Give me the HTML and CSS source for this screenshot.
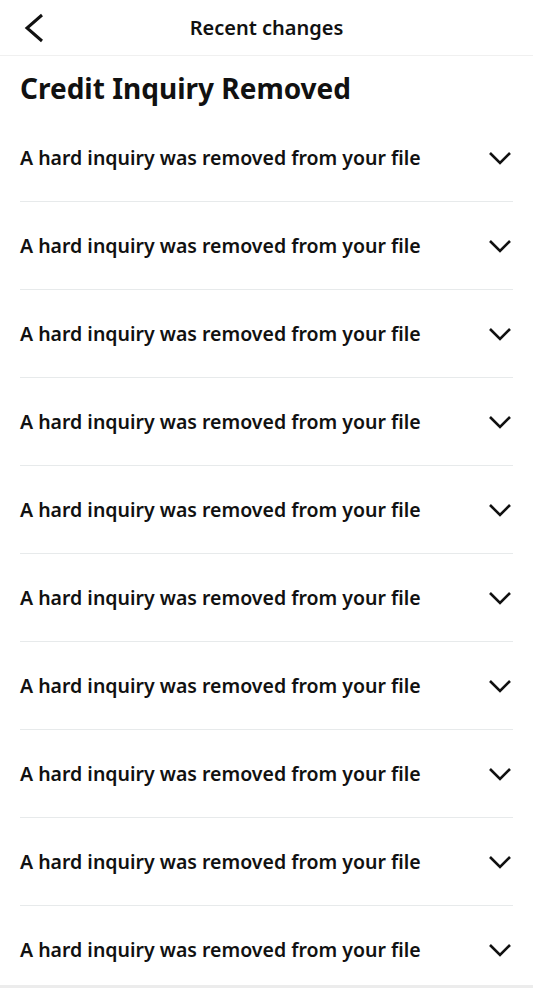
FILE: index.html
```html
<!DOCTYPE html>
<html lang="en">
<head>
<meta charset="utf-8">
<title>Recent changes</title>
<link rel="stylesheet" href="styles.css">
</head>
<body>
<header class="topbar">
  <button class="back" aria-label="Back">
    <svg width="24" height="32" viewBox="0 0 24 32"><path d="M20 3 L5 16 L20 29" fill="none" stroke="#111" stroke-width="3"/></svg>
  </button>
  <h1 class="topbar-title">Recent changes</h1>
</header>
<main>
  <h2 class="heading">Credit Inquiry Removed</h2>
  <ul class="list">
    <li class="row"><span class="row-text">A hard inquiry was removed from your file</span><svg class="chev" width="24" height="14" viewBox="0 0 24 14"><path d="M2 2 L12 12 L22 2" fill="none" stroke="#111" stroke-width="2.6"/></svg></li>
    <li class="row"><span class="row-text">A hard inquiry was removed from your file</span><svg class="chev" width="24" height="14" viewBox="0 0 24 14"><path d="M2 2 L12 12 L22 2" fill="none" stroke="#111" stroke-width="2.6"/></svg></li>
    <li class="row"><span class="row-text">A hard inquiry was removed from your file</span><svg class="chev" width="24" height="14" viewBox="0 0 24 14"><path d="M2 2 L12 12 L22 2" fill="none" stroke="#111" stroke-width="2.6"/></svg></li>
    <li class="row"><span class="row-text">A hard inquiry was removed from your file</span><svg class="chev" width="24" height="14" viewBox="0 0 24 14"><path d="M2 2 L12 12 L22 2" fill="none" stroke="#111" stroke-width="2.6"/></svg></li>
    <li class="row"><span class="row-text">A hard inquiry was removed from your file</span><svg class="chev" width="24" height="14" viewBox="0 0 24 14"><path d="M2 2 L12 12 L22 2" fill="none" stroke="#111" stroke-width="2.6"/></svg></li>
    <li class="row"><span class="row-text">A hard inquiry was removed from your file</span><svg class="chev" width="24" height="14" viewBox="0 0 24 14"><path d="M2 2 L12 12 L22 2" fill="none" stroke="#111" stroke-width="2.6"/></svg></li>
    <li class="row"><span class="row-text">A hard inquiry was removed from your file</span><svg class="chev" width="24" height="14" viewBox="0 0 24 14"><path d="M2 2 L12 12 L22 2" fill="none" stroke="#111" stroke-width="2.6"/></svg></li>
    <li class="row"><span class="row-text">A hard inquiry was removed from your file</span><svg class="chev" width="24" height="14" viewBox="0 0 24 14"><path d="M2 2 L12 12 L22 2" fill="none" stroke="#111" stroke-width="2.6"/></svg></li>
    <li class="row"><span class="row-text">A hard inquiry was removed from your file</span><svg class="chev" width="24" height="14" viewBox="0 0 24 14"><path d="M2 2 L12 12 L22 2" fill="none" stroke="#111" stroke-width="2.6"/></svg></li>
    <li class="row"><span class="row-text">A hard inquiry was removed from your file</span><svg class="chev" width="24" height="14" viewBox="0 0 24 14"><path d="M2 2 L12 12 L22 2" fill="none" stroke="#111" stroke-width="2.6"/></svg></li>
  </ul>
</main>
<div class="bottom-edge"></div>
</body>
</html>
```

FILE: styles.css
```css
html, body {
  margin: 0;
  padding: 0;
  background: #fff;
  color: #111;
  font-family: "Noto Sans", "Liberation Sans", sans-serif;
}
.topbar {
  height: 55px;
  border-bottom: 1px solid #f0f0f0;
  display: flex;
  align-items: center;
  justify-content: center;
  position: relative;
}
.back {
  position: absolute;
  left: 22px;
  top: 12px;
  background: none;
  border: 0;
  padding: 0;
  width: 24px;
  height: 32px;
}
.back svg { display: block; }
.topbar-title {
  margin: 0;
  font-size: 20px;
  font-weight: 600;
  letter-spacing: 0;
}
.heading {
  margin: 0;
  padding: 14px 20px 8px;
  line-height: 36px;
  font-size: 28px;
  font-weight: 700;
}
.list {
  list-style: none;
  margin: 0;
  padding: 0 20px;
}
.row {
  height: 87px;
  border-bottom: 1px solid #e7eaeb;
  display: flex;
  align-items: center;
  justify-content: space-between;
}
.row-text {
  font-size: 19.5px;
  font-weight: 600;
}
.chev { display: block; margin-right: 1px; }
.bottom-edge {
  position: fixed;
  left: 0;
  right: 0;
  bottom: 0;
  height: 3px;
  background: #ececec;
}
```
